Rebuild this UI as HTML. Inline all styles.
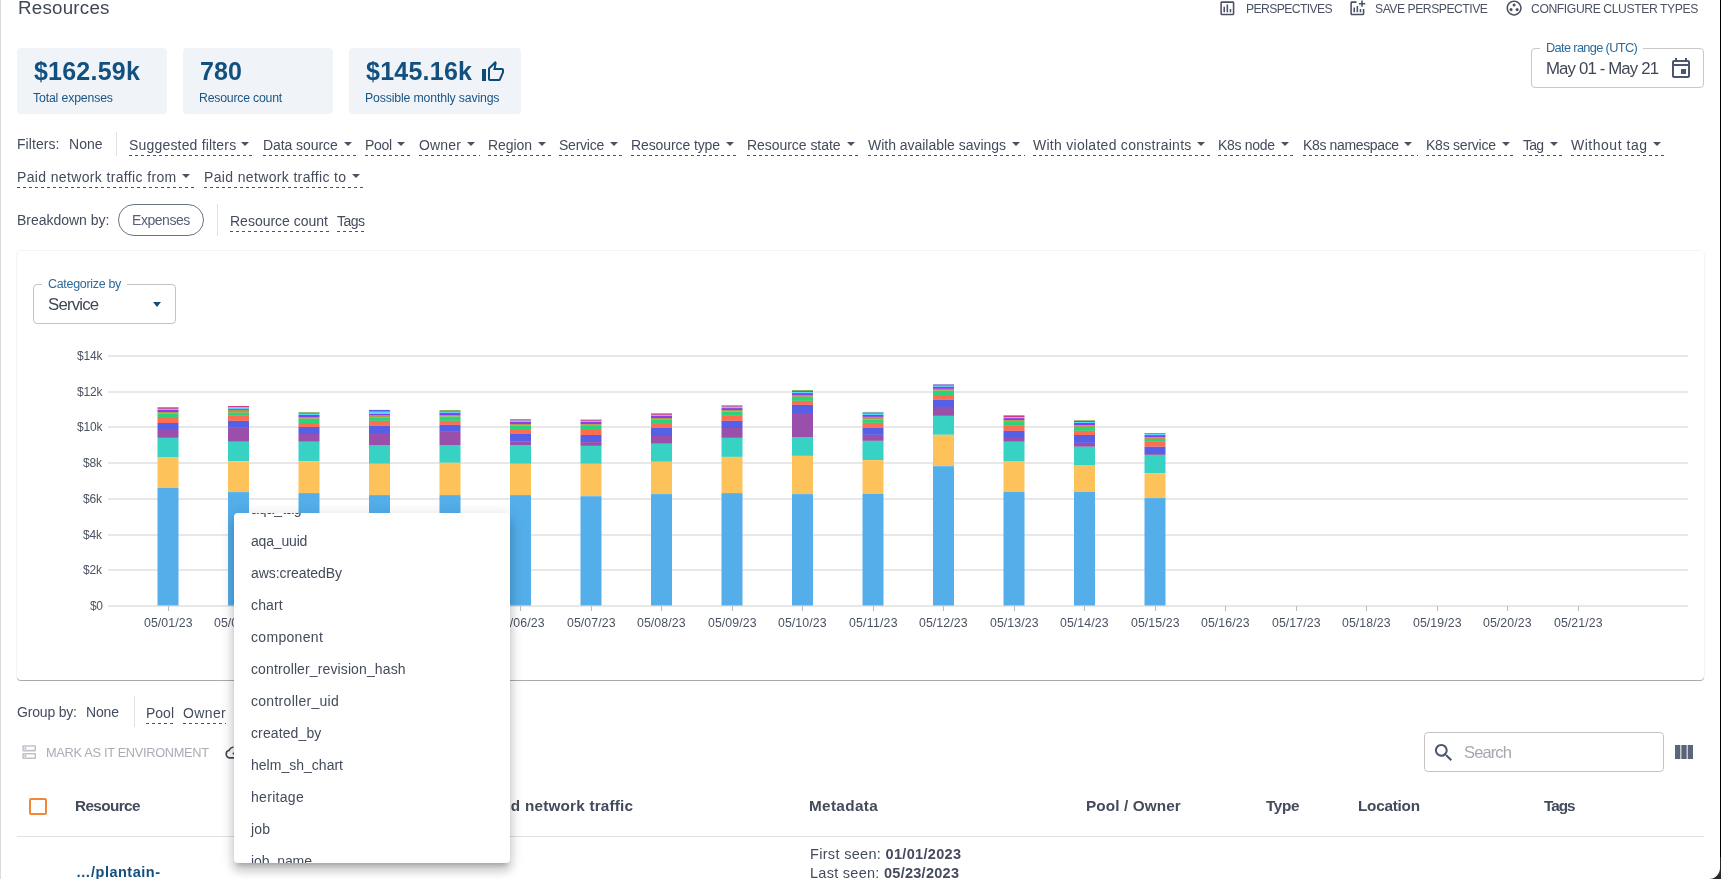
<!DOCTYPE html>
<html><head><meta charset="utf-8"><style>
html,body{margin:0;padding:0;background:#fff;width:1721px;height:879px;overflow:hidden;position:relative}
body{font-family:"Liberation Sans", sans-serif}
.t{position:absolute;white-space:nowrap;will-change:transform}
.caret{position:absolute;width:0;height:0;border-left:4px solid transparent;border-right:4px solid transparent;border-top:4px solid #4a5263}
.yl{position:absolute;right:1618.5px;font-size:12.5px;line-height:12.5px;color:#4a5263}
</style></head><body>
<div style="position:absolute;left:0px;top:0px;width:1px;height:879px;background:#dadada"></div><div class="t" style="left:17.5px;top:-1.11px;font-size:18.8px;line-height:18.8px;color:#3f4756;font-weight:400;letter-spacing:0.215px;">Resources</div><svg style="position:absolute;left:1218.4px;top:-1.0px" width="18.7" height="18.7" viewBox="0 0 24 24"><path fill="#4a5263" d="M19 3H5c-1.1 0-2 .9-2 2v14c0 1.1.9 2 2 2h14c1.1 0 2-.9 2-2V5c0-1.1-.9-2-2-2zm0 16H5V5h14v14zM7 10h2v7H7zm4-3h2v10h-2zm4 6h2v4h-2z"/></svg><div class="t" style="left:1245.7px;top:3.37px;font-size:12.2px;line-height:12.2px;color:#4a5263;font-weight:400;letter-spacing:-0.624px;">PERSPECTIVES</div><svg style="position:absolute;left:1348.4px;top:-1.0px" width="18.7" height="18.7" viewBox="0 0 24 24"><path fill="#4a5263" d="M22 5v2h-3v3h-2V7h-3V5h3V2h2v3h3zm-3 14H5V5h6V3H5c-1.1 0-2 .9-2 2v14c0 1.1.9 2 2 2h14c1.1 0 2-.9 2-2v-6h-2v6zm-4-6v4h2v-4h-2zm-4 4h2V9h-2v8zm-2 0v-6H7v6h2z"/></svg><div class="t" style="left:1374.7px;top:3.37px;font-size:12.2px;line-height:12.2px;color:#4a5263;font-weight:400;letter-spacing:-0.490px;">SAVE PERSPECTIVE</div><svg style="position:absolute;left:1504.9px;top:-0.8px" width="18.2" height="18.2" viewBox="0 0 24 24"><path fill="#4a5263" d="M12 2C6.48 2 2 6.48 2 12s4.48 10 10 10 10-4.48 10-10S17.52 2 12 2zm0 18c-4.41 0-8-3.59-8-8s3.59-8 8-8 8 3.59 8 8-3.59 8-8 8z"/><circle cx="8" cy="14" r="2" fill="#4a5263"/><circle cx="12" cy="8" r="2" fill="#4a5263"/><circle cx="16" cy="14" r="2" fill="#4a5263"/></svg><div class="t" style="left:1531.3px;top:3.37px;font-size:12.2px;line-height:12.2px;color:#4a5263;font-weight:400;letter-spacing:-0.415px;">CONFIGURE CLUSTER TYPES</div><div style="position:absolute;left:17px;top:48px;width:150px;height:66px;background:#f0f4f8;border-radius:4px"></div><div class="t" style="left:34px;top:58.84px;font-size:25px;line-height:25px;color:#11507f;font-weight:700;letter-spacing:0.217px;">$162.59k</div><div class="t" style="left:33.3px;top:92.29px;font-size:12.3px;line-height:12.3px;color:#1b5585;font-weight:400;letter-spacing:-0.156px;">Total expenses</div><div style="position:absolute;left:183px;top:48px;width:150px;height:66px;background:#f0f4f8;border-radius:4px"></div><div class="t" style="left:200px;top:58.84px;font-size:25px;line-height:25px;color:#11507f;font-weight:700;letter-spacing:0.141px;">780</div><div class="t" style="left:199.3px;top:92.29px;font-size:12.3px;line-height:12.3px;color:#1b5585;font-weight:400;letter-spacing:-0.219px;">Resource count</div><div style="position:absolute;left:349px;top:48px;width:172px;height:66px;background:#f0f4f8;border-radius:4px"></div><div class="t" style="left:366px;top:58.84px;font-size:25px;line-height:25px;color:#11507f;font-weight:700;letter-spacing:0.246px;">$145.16k</div><div class="t" style="left:365.3px;top:92.29px;font-size:12.3px;line-height:12.3px;color:#1b5585;font-weight:400;letter-spacing:-0.156px;">Possible monthly savings</div><svg style="position:absolute;left:481px;top:60px" width="24" height="24" viewBox="0 0 24 24"><path fill="#0c4a78" d="M21 8h-6.31l.95-4.57.03-.32c0-.41-.17-.79-.44-1.06L14.17 1 7.59 7.59C7.22 7.95 7 8.45 7 9v10c0 1.1.9 2 2 2h9c.83 0 1.54-.5 1.84-1.22l3.02-7.05c.09-.23.14-.47.14-.73v-2c0-1.1-.9-2-2-2zm0 4l-3 7H9V9l4.34-4.34L12.23 10H21v2zM1 9h4v12H1z"/></svg><div style="position:absolute;left:1531px;top:48px;width:173px;height:40px;box-sizing:border-box;border:1px solid #c8c8c8;border-radius:4px"></div><div style="position:absolute;left:1540px;top:44px;width:103px;height:8px;background:#fff"></div><div class="t" style="left:1545.5px;top:42.16px;font-size:12.8px;line-height:12.8px;color:#2d6a9a;font-weight:400;letter-spacing:-0.660px;">Date range (UTC)</div><div class="t" style="left:1545.8px;top:60.68px;font-size:16.8px;line-height:16.8px;color:#3f4756;font-weight:400;letter-spacing:-0.856px;">May 01 - May 21</div><svg style="position:absolute;left:1669px;top:55.8px" width="24" height="24" viewBox="0 0 24 24"><path fill="#4b5670" d="M19 4h-1V2h-2v2H8V2H6v2H5c-1.11 0-1.99.9-1.99 2L3 20c0 1.1.89 2 2 2h14c1.1 0 2-.9 2-2V6c0-1.1-.9-2-2-2zm0 16H5V10h14v10zm0-12H5V6h14v2zm-7 5h5v5h-5z"/></svg><div class="t" style="left:17.4px;top:136.65px;font-size:14px;line-height:14px;color:#434b5c;font-weight:400;letter-spacing:0.057px;">Filters:</div><div class="t" style="left:68.5px;top:136.65px;font-size:14px;line-height:14px;color:#434b5c;font-weight:400;letter-spacing:0.044px;">None</div><div style="position:absolute;left:116px;top:132px;width:1px;height:24px;background:#e2e2e2"></div><div class="t" style="left:128.6px;top:138.15px;font-size:14px;line-height:14px;color:#434b5c;font-weight:400;letter-spacing:0.181px;">Suggested filters</div><div class="caret" style="left:241.3px;top:142.0px"></div><div style="position:absolute;left:128.6px;top:155px;width:126.20000000000002px;height:1px;background:repeating-linear-gradient(90deg,#4a5263 0 3px,transparent 3px 6px)"></div><div class="t" style="left:263.2px;top:138.15px;font-size:14px;line-height:14px;color:#434b5c;font-weight:400;letter-spacing:-0.068px;">Data source</div><div class="caret" style="left:343.5px;top:142.0px"></div><div style="position:absolute;left:263.2px;top:155px;width:93.80000000000001px;height:1px;background:repeating-linear-gradient(90deg,#4a5263 0 3px,transparent 3px 6px)"></div><div class="t" style="left:364.6px;top:138.15px;font-size:14px;line-height:14px;color:#434b5c;font-weight:400;letter-spacing:-0.277px;">Pool</div><div class="caret" style="left:397.3px;top:142.0px"></div><div style="position:absolute;left:364.6px;top:155px;width:46.19999999999999px;height:1px;background:repeating-linear-gradient(90deg,#4a5263 0 3px,transparent 3px 6px)"></div><div class="t" style="left:419.2px;top:138.15px;font-size:14px;line-height:14px;color:#434b5c;font-weight:400;letter-spacing:0.141px;">Owner</div><div class="caret" style="left:466.5px;top:142.0px"></div><div style="position:absolute;left:419.2px;top:155px;width:60.80000000000001px;height:1px;background:repeating-linear-gradient(90deg,#4a5263 0 3px,transparent 3px 6px)"></div><div class="t" style="left:488px;top:138.15px;font-size:14px;line-height:14px;color:#434b5c;font-weight:400;letter-spacing:-0.075px;">Region</div><div class="caret" style="left:537.5px;top:142.0px"></div><div style="position:absolute;left:488px;top:155px;width:63px;height:1px;background:repeating-linear-gradient(90deg,#4a5263 0 3px,transparent 3px 6px)"></div><div class="t" style="left:558.7px;top:138.15px;font-size:14px;line-height:14px;color:#434b5c;font-weight:400;letter-spacing:-0.231px;">Service</div><div class="caret" style="left:609.5px;top:142.0px"></div><div style="position:absolute;left:558.7px;top:155px;width:64.29999999999995px;height:1px;background:repeating-linear-gradient(90deg,#4a5263 0 3px,transparent 3px 6px)"></div><div class="t" style="left:630.9px;top:138.15px;font-size:14px;line-height:14px;color:#434b5c;font-weight:400;letter-spacing:-0.098px;">Resource type</div><div class="caret" style="left:725.5px;top:142.0px"></div><div style="position:absolute;left:630.9px;top:155px;width:108.10000000000002px;height:1px;background:repeating-linear-gradient(90deg,#4a5263 0 3px,transparent 3px 6px)"></div><div class="t" style="left:747.4px;top:138.15px;font-size:14px;line-height:14px;color:#434b5c;font-weight:400;letter-spacing:-0.044px;">Resource state</div><div class="caret" style="left:846.5px;top:142.0px"></div><div style="position:absolute;left:747.4px;top:155px;width:112.60000000000002px;height:1px;background:repeating-linear-gradient(90deg,#4a5263 0 3px,transparent 3px 6px)"></div><div class="t" style="left:868px;top:138.15px;font-size:14px;line-height:14px;color:#434b5c;font-weight:400;letter-spacing:-0.025px;">With available savings</div><div class="caret" style="left:1011.5px;top:142.0px"></div><div style="position:absolute;left:868px;top:155px;width:157px;height:1px;background:repeating-linear-gradient(90deg,#4a5263 0 3px,transparent 3px 6px)"></div><div class="t" style="left:1033px;top:138.15px;font-size:14px;line-height:14px;color:#434b5c;font-weight:400;letter-spacing:0.274px;">With violated constraints</div><div class="caret" style="left:1196.8px;top:142.0px"></div><div style="position:absolute;left:1033px;top:155px;width:177.29999999999995px;height:1px;background:repeating-linear-gradient(90deg,#4a5263 0 3px,transparent 3px 6px)"></div><div class="t" style="left:1218px;top:138.15px;font-size:14px;line-height:14px;color:#434b5c;font-weight:400;letter-spacing:-0.310px;">K8s node</div><div class="caret" style="left:1280.5px;top:142.0px"></div><div style="position:absolute;left:1218px;top:155px;width:76px;height:1px;background:repeating-linear-gradient(90deg,#4a5263 0 3px,transparent 3px 6px)"></div><div class="t" style="left:1302.8px;top:138.15px;font-size:14px;line-height:14px;color:#434b5c;font-weight:400;letter-spacing:-0.359px;">K8s namespace</div><div class="caret" style="left:1404.4px;top:142.0px"></div><div style="position:absolute;left:1302.8px;top:155px;width:115.10000000000014px;height:1px;background:repeating-linear-gradient(90deg,#4a5263 0 3px,transparent 3px 6px)"></div><div class="t" style="left:1426px;top:138.15px;font-size:14px;line-height:14px;color:#434b5c;font-weight:400;letter-spacing:-0.236px;">K8s service</div><div class="caret" style="left:1501.5px;top:142.0px"></div><div style="position:absolute;left:1426px;top:155px;width:89px;height:1px;background:repeating-linear-gradient(90deg,#4a5263 0 3px,transparent 3px 6px)"></div><div class="t" style="left:1523px;top:138.15px;font-size:14px;line-height:14px;color:#434b5c;font-weight:400;letter-spacing:-0.789px;">Tag</div><div class="caret" style="left:1549.5px;top:142.0px"></div><div style="position:absolute;left:1523px;top:155px;width:40px;height:1px;background:repeating-linear-gradient(90deg,#4a5263 0 3px,transparent 3px 6px)"></div><div class="t" style="left:1571px;top:138.15px;font-size:14px;line-height:14px;color:#434b5c;font-weight:400;letter-spacing:0.517px;">Without tag</div><div class="caret" style="left:1652.5px;top:142.0px"></div><div style="position:absolute;left:1571px;top:155px;width:95px;height:1px;background:repeating-linear-gradient(90deg,#4a5263 0 3px,transparent 3px 6px)"></div><div class="t" style="left:17.4px;top:170.15px;font-size:14px;line-height:14px;color:#434b5c;font-weight:400;letter-spacing:0.355px;">Paid network traffic from</div><div class="caret" style="left:182.1px;top:174.0px"></div><div style="position:absolute;left:17.4px;top:187px;width:178.2px;height:1px;background:repeating-linear-gradient(90deg,#4a5263 0 3px,transparent 3px 6px)"></div><div class="t" style="left:203.9px;top:170.15px;font-size:14px;line-height:14px;color:#434b5c;font-weight:400;letter-spacing:0.351px;">Paid network traffic to</div><div class="caret" style="left:351.5px;top:174.0px"></div><div style="position:absolute;left:203.9px;top:187px;width:161.1px;height:1px;background:repeating-linear-gradient(90deg,#4a5263 0 3px,transparent 3px 6px)"></div><div class="t" style="left:17.4px;top:213.15px;font-size:14px;line-height:14px;color:#434b5c;font-weight:400;letter-spacing:-0.017px;">Breakdown by:</div><div style="position:absolute;left:118px;top:204px;width:86px;height:32px;box-sizing:border-box;border:1px solid #6b7488;border-radius:16px"></div><div class="t" style="left:132px;top:212.75px;font-size:14px;line-height:14px;color:#566075;font-weight:400;letter-spacing:-0.455px;">Expenses</div><div style="position:absolute;left:217px;top:204px;width:1px;height:32px;background:#e2e2e2"></div><div class="t" style="left:230.2px;top:214.15px;font-size:14px;line-height:14px;color:#434b5c;font-weight:400;letter-spacing:-0.005px;">Resource count</div><div style="position:absolute;left:230.2px;top:231px;width:98.80000000000001px;height:1px;background:repeating-linear-gradient(90deg,#4a5263 0 3px,transparent 3px 6px)"></div><div class="t" style="left:336.9px;top:214.15px;font-size:14px;line-height:14px;color:#434b5c;font-weight:400;letter-spacing:-0.559px;">Tags</div><div style="position:absolute;left:336.9px;top:231px;width:29.100000000000023px;height:1px;background:repeating-linear-gradient(90deg,#4a5263 0 3px,transparent 3px 6px)"></div><div style="position:absolute;left:17px;top:251px;width:1687px;height:429px;background:#fff;border-radius:4px;box-shadow:0 1px 0.6px rgba(0,0,0,0.3), 0 0 0 1px rgba(0,0,0,0.045)"></div><div style="position:absolute;left:33px;top:284px;width:143px;height:40px;box-sizing:border-box;border:1px solid #c4c4c4;border-radius:4px"></div><div style="position:absolute;left:42px;top:278px;width:85px;height:8px;background:#fff"></div><div class="t" style="left:47.6px;top:277.62px;font-size:12.5px;line-height:12.5px;color:#2d6a9a;font-weight:400;letter-spacing:-0.319px;">Categorize by</div><div class="t" style="left:47.6px;top:297.28px;font-size:16.8px;line-height:16.8px;color:#3f4756;font-weight:400;letter-spacing:-0.795px;">Service</div><div style="position:absolute;left:152.5px;top:301.5px;width:0;height:0;border-left:4.7px solid transparent;border-right:4.7px solid transparent;border-top:5.3px solid #0f4d7a"></div><div style="position:absolute;left:108px;top:605px;width:1580px;height:2px;background:#e8e8e8"></div><div class="t" style="left:89.6px;top:600.34px;font-size:12px;line-height:12px;color:#4a5263;font-weight:400;letter-spacing:-0.459px;">$0</div><div style="position:absolute;left:108px;top:569px;width:1580px;height:2px;background:#e8e8e8"></div><div class="t" style="left:83.4px;top:564.34px;font-size:12px;line-height:12px;color:#4a5263;font-weight:400;letter-spacing:-0.130px;">$2k</div><div style="position:absolute;left:108px;top:534px;width:1580px;height:2px;background:#e8e8e8"></div><div class="t" style="left:83.4px;top:529.34px;font-size:12px;line-height:12px;color:#4a5263;font-weight:400;letter-spacing:-0.130px;">$4k</div><div style="position:absolute;left:108px;top:498px;width:1580px;height:2px;background:#e8e8e8"></div><div class="t" style="left:83.4px;top:493.34px;font-size:12px;line-height:12px;color:#4a5263;font-weight:400;letter-spacing:-0.130px;">$6k</div><div style="position:absolute;left:108px;top:462px;width:1580px;height:2px;background:#e8e8e8"></div><div class="t" style="left:83.4px;top:457.34px;font-size:12px;line-height:12px;color:#4a5263;font-weight:400;letter-spacing:-0.130px;">$8k</div><div style="position:absolute;left:108px;top:426px;width:1580px;height:2px;background:#e8e8e8"></div><div class="t" style="left:77.0px;top:421.34px;font-size:12px;line-height:12px;color:#4a5263;font-weight:400;letter-spacing:-0.177px;">$10k</div><div style="position:absolute;left:108px;top:391px;width:1580px;height:2px;background:#e8e8e8"></div><div class="t" style="left:77.0px;top:386.34px;font-size:12px;line-height:12px;color:#4a5263;font-weight:400;letter-spacing:-0.177px;">$12k</div><div style="position:absolute;left:108px;top:355px;width:1580px;height:2px;background:#e8e8e8"></div><div class="t" style="left:77.0px;top:350.34px;font-size:12px;line-height:12px;color:#4a5263;font-weight:400;letter-spacing:-0.177px;">$14k</div><div style="position:absolute;left:168px;top:606px;width:1px;height:5px;background:#b7bcc6"></div><div class="t" style="left:143.7px;top:616.59px;font-size:12.3px;line-height:12.3px;color:#4a5263;font-weight:400;letter-spacing:0.089px;">05/01/23</div><div style="position:absolute;left:238px;top:606px;width:1px;height:5px;background:#b7bcc6"></div><div class="t" style="left:214.2px;top:616.59px;font-size:12.3px;line-height:12.3px;color:#4a5263;font-weight:400;letter-spacing:0.089px;">05/02/23</div><div style="position:absolute;left:309px;top:606px;width:1px;height:5px;background:#b7bcc6"></div><div class="t" style="left:284.7px;top:616.59px;font-size:12.3px;line-height:12.3px;color:#4a5263;font-weight:400;letter-spacing:0.089px;">05/03/23</div><div style="position:absolute;left:379px;top:606px;width:1px;height:5px;background:#b7bcc6"></div><div class="t" style="left:355.2px;top:616.59px;font-size:12.3px;line-height:12.3px;color:#4a5263;font-weight:400;letter-spacing:0.089px;">05/04/23</div><div style="position:absolute;left:450px;top:606px;width:1px;height:5px;background:#b7bcc6"></div><div class="t" style="left:425.7px;top:616.59px;font-size:12.3px;line-height:12.3px;color:#4a5263;font-weight:400;letter-spacing:0.089px;">05/05/23</div><div style="position:absolute;left:520px;top:606px;width:1px;height:5px;background:#b7bcc6"></div><div class="t" style="left:496.2px;top:616.59px;font-size:12.3px;line-height:12.3px;color:#4a5263;font-weight:400;letter-spacing:0.089px;">05/06/23</div><div style="position:absolute;left:591px;top:606px;width:1px;height:5px;background:#b7bcc6"></div><div class="t" style="left:566.7px;top:616.59px;font-size:12.3px;line-height:12.3px;color:#4a5263;font-weight:400;letter-spacing:0.089px;">05/07/23</div><div style="position:absolute;left:661px;top:606px;width:1px;height:5px;background:#b7bcc6"></div><div class="t" style="left:637.2px;top:616.59px;font-size:12.3px;line-height:12.3px;color:#4a5263;font-weight:400;letter-spacing:0.089px;">05/08/23</div><div style="position:absolute;left:732px;top:606px;width:1px;height:5px;background:#b7bcc6"></div><div class="t" style="left:707.7px;top:616.59px;font-size:12.3px;line-height:12.3px;color:#4a5263;font-weight:400;letter-spacing:0.089px;">05/09/23</div><div style="position:absolute;left:802px;top:606px;width:1px;height:5px;background:#b7bcc6"></div><div class="t" style="left:778.2px;top:616.59px;font-size:12.3px;line-height:12.3px;color:#4a5263;font-weight:400;letter-spacing:0.089px;">05/10/23</div><div style="position:absolute;left:873px;top:606px;width:1px;height:5px;background:#b7bcc6"></div><div class="t" style="left:848.7px;top:616.59px;font-size:12.3px;line-height:12.3px;color:#4a5263;font-weight:400;letter-spacing:0.219px;">05/11/23</div><div style="position:absolute;left:943px;top:606px;width:1px;height:5px;background:#b7bcc6"></div><div class="t" style="left:919.2px;top:616.59px;font-size:12.3px;line-height:12.3px;color:#4a5263;font-weight:400;letter-spacing:0.089px;">05/12/23</div><div style="position:absolute;left:1014px;top:606px;width:1px;height:5px;background:#b7bcc6"></div><div class="t" style="left:989.7px;top:616.59px;font-size:12.3px;line-height:12.3px;color:#4a5263;font-weight:400;letter-spacing:0.089px;">05/13/23</div><div style="position:absolute;left:1084px;top:606px;width:1px;height:5px;background:#b7bcc6"></div><div class="t" style="left:1060.2px;top:616.59px;font-size:12.3px;line-height:12.3px;color:#4a5263;font-weight:400;letter-spacing:0.089px;">05/14/23</div><div style="position:absolute;left:1155px;top:606px;width:1px;height:5px;background:#b7bcc6"></div><div class="t" style="left:1130.7px;top:616.59px;font-size:12.3px;line-height:12.3px;color:#4a5263;font-weight:400;letter-spacing:0.089px;">05/15/23</div><div style="position:absolute;left:1225px;top:606px;width:1px;height:5px;background:#b7bcc6"></div><div class="t" style="left:1201.2px;top:616.59px;font-size:12.3px;line-height:12.3px;color:#4a5263;font-weight:400;letter-spacing:0.089px;">05/16/23</div><div style="position:absolute;left:1296px;top:606px;width:1px;height:5px;background:#b7bcc6"></div><div class="t" style="left:1271.7px;top:616.59px;font-size:12.3px;line-height:12.3px;color:#4a5263;font-weight:400;letter-spacing:0.089px;">05/17/23</div><div style="position:absolute;left:1366px;top:606px;width:1px;height:5px;background:#b7bcc6"></div><div class="t" style="left:1342.2px;top:616.59px;font-size:12.3px;line-height:12.3px;color:#4a5263;font-weight:400;letter-spacing:0.089px;">05/18/23</div><div style="position:absolute;left:1437px;top:606px;width:1px;height:5px;background:#b7bcc6"></div><div class="t" style="left:1412.7px;top:616.59px;font-size:12.3px;line-height:12.3px;color:#4a5263;font-weight:400;letter-spacing:0.089px;">05/19/23</div><div style="position:absolute;left:1507px;top:606px;width:1px;height:5px;background:#b7bcc6"></div><div class="t" style="left:1483.2px;top:616.59px;font-size:12.3px;line-height:12.3px;color:#4a5263;font-weight:400;letter-spacing:0.089px;">05/20/23</div><div style="position:absolute;left:1578px;top:606px;width:1px;height:5px;background:#b7bcc6"></div><div class="t" style="left:1553.7px;top:616.59px;font-size:12.3px;line-height:12.3px;color:#4a5263;font-weight:400;letter-spacing:0.089px;">05/21/23</div><svg style="position:absolute;left:0;top:0" width="1721" height="879"><rect x="157.5" y="407.1" width="21" height="0.90" fill="#7fa64b"/><rect x="157.5" y="408.0" width="21" height="0.90" fill="#d23b86"/><rect x="157.5" y="408.9" width="21" height="1.00" fill="#4ddcfb"/><rect x="157.5" y="409.9" width="21" height="2.10" fill="#8a3ef0"/><rect x="157.5" y="412.0" width="21" height="1.80" fill="#b5984c"/><rect x="157.5" y="413.8" width="21" height="4.20" fill="#2bd47a"/><rect x="157.5" y="418.0" width="21" height="5.00" fill="#fe6f52"/><rect x="157.5" y="423.0" width="21" height="7.00" fill="#5560e6"/><rect x="157.5" y="430.0" width="21" height="7.90" fill="#9a50ab"/><rect x="157.5" y="437.9" width="21" height="19.20" fill="#38d2c5"/><rect x="157.5" y="457.1" width="21" height="30.90" fill="#fdc35a"/><rect x="157.5" y="488.0" width="21" height="117.50" fill="#53aeea"/><rect x="228.0" y="406.0" width="21" height="1.00" fill="#d23b86"/><rect x="228.0" y="407.0" width="21" height="1.90" fill="#4ddcfb"/><rect x="228.0" y="408.9" width="21" height="1.00" fill="#8a3ef0"/><rect x="228.0" y="409.9" width="21" height="2.90" fill="#b5984c"/><rect x="228.0" y="412.8" width="21" height="3.10" fill="#2bd47a"/><rect x="228.0" y="415.9" width="21" height="5.00" fill="#fe6f52"/><rect x="228.0" y="420.9" width="21" height="7.00" fill="#5560e6"/><rect x="228.0" y="427.9" width="21" height="13.90" fill="#9a50ab"/><rect x="228.0" y="441.8" width="21" height="19.40" fill="#38d2c5"/><rect x="228.0" y="461.2" width="21" height="30.90" fill="#fdc35a"/><rect x="228.0" y="492.1" width="21" height="113.40" fill="#53aeea"/><rect x="298.5" y="412.2" width="21" height="0.90" fill="#7fa64b"/><rect x="298.5" y="413.1" width="21" height="0.80" fill="#d23b86"/><rect x="298.5" y="413.9" width="21" height="1.10" fill="#4ddcfb"/><rect x="298.5" y="415.0" width="21" height="2.00" fill="#8a3ef0"/><rect x="298.5" y="417.0" width="21" height="1.80" fill="#b5984c"/><rect x="298.5" y="418.8" width="21" height="4.20" fill="#2bd47a"/><rect x="298.5" y="423.0" width="21" height="4.00" fill="#fe6f52"/><rect x="298.5" y="427.0" width="21" height="7.00" fill="#5560e6"/><rect x="298.5" y="434.0" width="21" height="7.80" fill="#9a50ab"/><rect x="298.5" y="441.8" width="21" height="19.40" fill="#38d2c5"/><rect x="298.5" y="461.2" width="21" height="31.90" fill="#fdc35a"/><rect x="298.5" y="493.1" width="21" height="112.40" fill="#53aeea"/><rect x="369.0" y="409.9" width="21" height="1.10" fill="#5560e6"/><rect x="369.0" y="411.0" width="21" height="0.80" fill="#d23b86"/><rect x="369.0" y="411.8" width="21" height="2.10" fill="#4ddcfb"/><rect x="369.0" y="413.9" width="21" height="1.10" fill="#8a3ef0"/><rect x="369.0" y="415.0" width="21" height="2.80" fill="#b5984c"/><rect x="369.0" y="417.8" width="21" height="3.10" fill="#2bd47a"/><rect x="369.0" y="420.9" width="21" height="5.00" fill="#fe6f52"/><rect x="369.0" y="425.9" width="21" height="7.10" fill="#5560e6"/><rect x="369.0" y="433.0" width="21" height="12.00" fill="#9a50ab"/><rect x="369.0" y="445.0" width="21" height="18.80" fill="#38d2c5"/><rect x="369.0" y="463.8" width="21" height="31.30" fill="#fdc35a"/><rect x="369.0" y="495.1" width="21" height="110.40" fill="#53aeea"/><rect x="439.5" y="410.1" width="21" height="0.90" fill="#7fa64b"/><rect x="439.5" y="411.0" width="21" height="0.80" fill="#d23b86"/><rect x="439.5" y="411.8" width="21" height="1.10" fill="#4ddcfb"/><rect x="439.5" y="412.9" width="21" height="2.10" fill="#8a3ef0"/><rect x="439.5" y="415.0" width="21" height="1.70" fill="#b5984c"/><rect x="439.5" y="416.7" width="21" height="4.20" fill="#2bd47a"/><rect x="439.5" y="420.9" width="21" height="4.00" fill="#fe6f52"/><rect x="439.5" y="424.9" width="21" height="7.00" fill="#5560e6"/><rect x="439.5" y="431.9" width="21" height="13.10" fill="#9a50ab"/><rect x="439.5" y="445.0" width="21" height="17.80" fill="#38d2c5"/><rect x="439.5" y="462.8" width="21" height="32.30" fill="#fdc35a"/><rect x="439.5" y="495.1" width="21" height="110.40" fill="#53aeea"/><rect x="510.0" y="419.0" width="21" height="0.90" fill="#7fa64b"/><rect x="510.0" y="419.9" width="21" height="0.80" fill="#d23b86"/><rect x="510.0" y="420.7" width="21" height="1.30" fill="#4ddcfb"/><rect x="510.0" y="422.0" width="21" height="2.00" fill="#8a3ef0"/><rect x="510.0" y="424.0" width="21" height="1.80" fill="#b5984c"/><rect x="510.0" y="425.8" width="21" height="4.20" fill="#2bd47a"/><rect x="510.0" y="430.0" width="21" height="4.00" fill="#fe6f52"/><rect x="510.0" y="434.0" width="21" height="7.80" fill="#5560e6"/><rect x="510.0" y="441.8" width="21" height="3.20" fill="#9a50ab"/><rect x="510.0" y="445.0" width="21" height="18.80" fill="#38d2c5"/><rect x="510.0" y="463.8" width="21" height="31.30" fill="#fdc35a"/><rect x="510.0" y="495.1" width="21" height="110.40" fill="#53aeea"/><rect x="580.5" y="419.1" width="21" height="0.80" fill="#fdc35a"/><rect x="580.5" y="419.9" width="21" height="1.00" fill="#d23b86"/><rect x="580.5" y="420.9" width="21" height="1.10" fill="#4ddcfb"/><rect x="580.5" y="422.0" width="21" height="2.10" fill="#8a3ef0"/><rect x="580.5" y="424.1" width="21" height="1.80" fill="#b5984c"/><rect x="580.5" y="425.9" width="21" height="4.10" fill="#2bd47a"/><rect x="580.5" y="430.0" width="21" height="5.00" fill="#fe6f52"/><rect x="580.5" y="435.0" width="21" height="7.10" fill="#5560e6"/><rect x="580.5" y="442.1" width="21" height="3.80" fill="#9a50ab"/><rect x="580.5" y="445.9" width="21" height="17.90" fill="#38d2c5"/><rect x="580.5" y="463.8" width="21" height="32.40" fill="#fdc35a"/><rect x="580.5" y="496.2" width="21" height="109.30" fill="#53aeea"/><rect x="651.0" y="413.1" width="21" height="0.70" fill="#53aeea"/><rect x="651.0" y="413.8" width="21" height="1.10" fill="#d23b86"/><rect x="651.0" y="414.9" width="21" height="1.00" fill="#4ddcfb"/><rect x="651.0" y="415.9" width="21" height="2.10" fill="#8a3ef0"/><rect x="651.0" y="418.0" width="21" height="1.80" fill="#b5984c"/><rect x="651.0" y="419.8" width="21" height="4.20" fill="#2bd47a"/><rect x="651.0" y="424.0" width="21" height="4.00" fill="#fe6f52"/><rect x="651.0" y="428.0" width="21" height="8.00" fill="#5560e6"/><rect x="651.0" y="436.0" width="21" height="7.80" fill="#9a50ab"/><rect x="651.0" y="443.8" width="21" height="18.00" fill="#38d2c5"/><rect x="651.0" y="461.8" width="21" height="32.30" fill="#fdc35a"/><rect x="651.0" y="494.1" width="21" height="111.40" fill="#53aeea"/><rect x="721.5" y="405.1" width="21" height="0.70" fill="#53aeea"/><rect x="721.5" y="405.8" width="21" height="1.00" fill="#d23b86"/><rect x="721.5" y="406.8" width="21" height="1.30" fill="#4ddcfb"/><rect x="721.5" y="408.1" width="21" height="1.90" fill="#8a3ef0"/><rect x="721.5" y="410.0" width="21" height="1.70" fill="#b5984c"/><rect x="721.5" y="411.7" width="21" height="4.20" fill="#2bd47a"/><rect x="721.5" y="415.9" width="21" height="5.00" fill="#fe6f52"/><rect x="721.5" y="420.9" width="21" height="7.10" fill="#5560e6"/><rect x="721.5" y="428.0" width="21" height="9.90" fill="#9a50ab"/><rect x="721.5" y="437.9" width="21" height="19.00" fill="#38d2c5"/><rect x="721.5" y="456.9" width="21" height="36.20" fill="#fdc35a"/><rect x="721.5" y="493.1" width="21" height="112.40" fill="#53aeea"/><rect x="792.0" y="390.1" width="21" height="0.90" fill="#7fa64b"/><rect x="792.0" y="391.0" width="21" height="1.00" fill="#d23b86"/><rect x="792.0" y="392.0" width="21" height="1.10" fill="#4ddcfb"/><rect x="792.0" y="393.1" width="21" height="1.90" fill="#8a3ef0"/><rect x="792.0" y="395.0" width="21" height="1.90" fill="#b5984c"/><rect x="792.0" y="396.9" width="21" height="4.00" fill="#2bd47a"/><rect x="792.0" y="400.9" width="21" height="4.00" fill="#fe6f52"/><rect x="792.0" y="404.9" width="21" height="8.10" fill="#5560e6"/><rect x="792.0" y="413.0" width="21" height="24.00" fill="#9a50ab"/><rect x="792.0" y="437.0" width="21" height="18.90" fill="#38d2c5"/><rect x="792.0" y="455.9" width="21" height="38.20" fill="#fdc35a"/><rect x="792.0" y="494.1" width="21" height="111.40" fill="#53aeea"/><rect x="862.5" y="411.9" width="21" height="0.80" fill="#38d2c5"/><rect x="862.5" y="412.7" width="21" height="1.10" fill="#d23b86"/><rect x="862.5" y="413.8" width="21" height="1.20" fill="#4ddcfb"/><rect x="862.5" y="415.0" width="21" height="1.90" fill="#8a3ef0"/><rect x="862.5" y="416.9" width="21" height="2.80" fill="#b5984c"/><rect x="862.5" y="419.7" width="21" height="3.20" fill="#2bd47a"/><rect x="862.5" y="422.9" width="21" height="5.00" fill="#fe6f52"/><rect x="862.5" y="427.9" width="21" height="7.00" fill="#5560e6"/><rect x="862.5" y="434.9" width="21" height="6.00" fill="#9a50ab"/><rect x="862.5" y="440.9" width="21" height="19.20" fill="#38d2c5"/><rect x="862.5" y="460.1" width="21" height="33.90" fill="#fdc35a"/><rect x="862.5" y="494.0" width="21" height="111.50" fill="#53aeea"/><rect x="933.0" y="384.0" width="21" height="0.70" fill="#53aeea"/><rect x="933.0" y="384.7" width="21" height="1.10" fill="#d23b86"/><rect x="933.0" y="385.8" width="21" height="1.00" fill="#4ddcfb"/><rect x="933.0" y="386.8" width="21" height="2.10" fill="#8a3ef0"/><rect x="933.0" y="388.9" width="21" height="1.90" fill="#b5984c"/><rect x="933.0" y="390.8" width="21" height="4.20" fill="#2bd47a"/><rect x="933.0" y="395.0" width="21" height="4.90" fill="#fe6f52"/><rect x="933.0" y="399.9" width="21" height="7.10" fill="#5560e6"/><rect x="933.0" y="407.0" width="21" height="8.90" fill="#9a50ab"/><rect x="933.0" y="415.9" width="21" height="18.90" fill="#38d2c5"/><rect x="933.0" y="434.8" width="21" height="31.40" fill="#fdc35a"/><rect x="933.0" y="466.2" width="21" height="139.30" fill="#53aeea"/><rect x="1003.5" y="415.1" width="21" height="0.90" fill="#53aeea"/><rect x="1003.5" y="416.0" width="21" height="1.00" fill="#d23b86"/><rect x="1003.5" y="417.0" width="21" height="1.10" fill="#4ddcfb"/><rect x="1003.5" y="418.1" width="21" height="1.90" fill="#8a3ef0"/><rect x="1003.5" y="420.0" width="21" height="1.90" fill="#b5984c"/><rect x="1003.5" y="421.9" width="21" height="4.00" fill="#2bd47a"/><rect x="1003.5" y="425.9" width="21" height="5.00" fill="#fe6f52"/><rect x="1003.5" y="430.9" width="21" height="7.10" fill="#5560e6"/><rect x="1003.5" y="438.0" width="21" height="3.80" fill="#9a50ab"/><rect x="1003.5" y="441.8" width="21" height="19.20" fill="#38d2c5"/><rect x="1003.5" y="461.0" width="21" height="31.00" fill="#fdc35a"/><rect x="1003.5" y="492.0" width="21" height="113.50" fill="#53aeea"/><rect x="1074.0" y="420.2" width="21" height="0.70" fill="#7fa64b"/><rect x="1074.0" y="420.9" width="21" height="1.10" fill="#d23b86"/><rect x="1074.0" y="422.0" width="21" height="1.00" fill="#4ddcfb"/><rect x="1074.0" y="423.0" width="21" height="2.10" fill="#8a3ef0"/><rect x="1074.0" y="425.1" width="21" height="1.90" fill="#b5984c"/><rect x="1074.0" y="427.0" width="21" height="3.90" fill="#2bd47a"/><rect x="1074.0" y="430.9" width="21" height="4.10" fill="#fe6f52"/><rect x="1074.0" y="435.0" width="21" height="7.90" fill="#5560e6"/><rect x="1074.0" y="442.9" width="21" height="3.90" fill="#9a50ab"/><rect x="1074.0" y="446.8" width="21" height="18.20" fill="#38d2c5"/><rect x="1074.0" y="465.0" width="21" height="27.00" fill="#fdc35a"/><rect x="1074.0" y="492.0" width="21" height="113.50" fill="#53aeea"/><rect x="1144.5" y="433.0" width="21" height="1.10" fill="#7fa64b"/><rect x="1144.5" y="434.1" width="21" height="1.00" fill="#4ddcfb"/><rect x="1144.5" y="435.1" width="21" height="2.00" fill="#8a3ef0"/><rect x="1144.5" y="437.1" width="21" height="1.90" fill="#b5984c"/><rect x="1144.5" y="439.0" width="21" height="2.90" fill="#2bd47a"/><rect x="1144.5" y="441.9" width="21" height="4.90" fill="#fe6f52"/><rect x="1144.5" y="446.8" width="21" height="7.20" fill="#5560e6"/><rect x="1144.5" y="454.0" width="21" height="0.90" fill="#9a50ab"/><rect x="1144.5" y="454.9" width="21" height="18.20" fill="#38d2c5"/><rect x="1144.5" y="473.1" width="21" height="25.00" fill="#fdc35a"/><rect x="1144.5" y="498.1" width="21" height="107.40" fill="#53aeea"/></svg><div class="t" style="left:17.4px;top:704.95px;font-size:14px;line-height:14px;color:#434b5c;font-weight:400;letter-spacing:-0.186px;">Group by:</div><div class="t" style="left:86.4px;top:704.95px;font-size:14px;line-height:14px;color:#434b5c;font-weight:400;letter-spacing:-0.156px;">None</div><div style="position:absolute;left:134px;top:696px;width:1px;height:31px;background:#e2e2e2"></div><div class="t" style="left:146.4px;top:706.15px;font-size:14px;line-height:14px;color:#434b5c;font-weight:400;letter-spacing:-0.010px;">Pool</div><div style="position:absolute;left:146.4px;top:723px;width:29.099999999999994px;height:1px;background:repeating-linear-gradient(90deg,#4a5263 0 3px,transparent 3px 6px)"></div><div class="t" style="left:183.3px;top:706.15px;font-size:14px;line-height:14px;color:#434b5c;font-weight:400;letter-spacing:0.366px;">Owner</div><div style="position:absolute;left:183.3px;top:723px;width:42.69999999999999px;height:1px;background:repeating-linear-gradient(90deg,#4a5263 0 3px,transparent 3px 6px)"></div><div class="t" style="left:46.4px;top:746.76px;font-size:12.8px;line-height:12.8px;color:#a9adb6;font-weight:400;letter-spacing:-0.319px;">MARK AS IT ENVIRONMENT</div><svg style="position:absolute;left:19.75px;top:743.3px" width="18.3" height="18.3" viewBox="0 0 24 24"><path fill="#bfc2c8" d="M19 15v4H5v-4h14m1-2H4c-.55 0-1 .45-1 1v6c0 .55.45 1 1 1h16c.55 0 1-.45 1-1v-6c0-.55-.45-1-1-1zM7 18.5c-.82 0-1.5-.67-1.5-1.5s.68-1.5 1.5-1.5 1.5.67 1.5 1.5-.67 1.5-1.5 1.5zM19 5v4H5V5h14m1-2H4c-.55 0-1 .45-1 1v6c0 .55.45 1 1 1h16c.55 0 1-.45 1-1V4c0-.55-.45-1-1-1zM7 8.5c-.82 0-1.5-.67-1.5-1.5S6.18 5.5 7 5.5s1.5.68 1.5 1.5S7.83 8.5 7 8.5z"/></svg><svg style="position:absolute;left:220px;top:740px" width="20" height="24"><path d="M13.5 7 C10 7.5 9.5 9.5 9 10.5 C7 10.8 6.2 12.5 6.2 14 C6.2 16.3 8 17.8 10 17.8 L16 17.8" fill="none" stroke="#3f4756" stroke-width="1.7"/><circle cx="13.5" cy="13.5" r="1" fill="#3f4756"/></svg><div style="position:absolute;left:1424px;top:732px;width:240px;height:40px;box-sizing:border-box;border:1px solid #c4c4c4;border-radius:4px"></div><svg style="position:absolute;left:1432px;top:740.6px" width="23.5" height="23.5" viewBox="0 0 24 24"><path fill="#4b5670" d="M15.5 14h-.79l-.28-.27C15.41 12.59 16 11.11 16 9.5 16 5.91 13.09 3 9.5 3S3 5.91 3 9.5 5.91 16 9.5 16c1.61 0 3.09-.59 4.23-1.57l.27.28v.79l5 4.99L20.49 19l-4.99-5zm-6 0C7.01 14 5 11.99 5 9.5S7.01 5 9.5 5 14 7.01 14 9.5 11.99 14 9.5 14z"/></svg><div class="t" style="left:1464.2px;top:744.03px;font-size:16.5px;line-height:16.5px;color:#a3a7b0;font-weight:400;letter-spacing:-0.876px;">Search</div><svg style="position:absolute;left:1672px;top:740.3px" width="24" height="24" viewBox="0 0 24 24"><path fill="#5b6478" d="M14.67 5v14H9.33V5h5.34zm1 14H21V5h-5.33v14zm-7.34 0V5H3v14h5.33z"/></svg><div style="position:absolute;left:29px;top:798px;width:18px;height:17px;box-sizing:border-box;border:2px solid #f0883a;border-radius:2px"></div><div class="t" style="left:74.9px;top:797.55px;font-size:15.3px;line-height:15.3px;color:#434b5c;font-weight:700;letter-spacing:-0.603px;">Resource</div><div class="t" style="left:809.0px;top:797.55px;font-size:15.3px;line-height:15.3px;color:#434b5c;font-weight:700;letter-spacing:0.341px;">Metadata</div><div class="t" style="left:1086.0px;top:797.55px;font-size:15.3px;line-height:15.3px;color:#434b5c;font-weight:700;letter-spacing:0.118px;">Pool / Owner</div><div class="t" style="left:1265.6000000000001px;top:797.55px;font-size:15.3px;line-height:15.3px;color:#434b5c;font-weight:700;letter-spacing:-0.359px;">Type</div><div class="t" style="left:1358.2px;top:797.55px;font-size:15.3px;line-height:15.3px;color:#434b5c;font-weight:700;letter-spacing:-0.250px;">Location</div><div class="t" style="left:1543.8px;top:797.55px;font-size:15.3px;line-height:15.3px;color:#434b5c;font-weight:700;letter-spacing:-0.993px;">Tags</div><div class="t" style="left:485px;top:797.55px;font-size:15.3px;line-height:15.3px;color:#434b5c;font-weight:700;letter-spacing:0.896px;">Paid</div><div class="t" style="left:525px;top:797.55px;font-size:15.3px;line-height:15.3px;color:#434b5c;font-weight:700;letter-spacing:0.185px;">network traffic</div><div style="position:absolute;left:17px;top:836px;width:1687px;height:1px;background:#e0e0e0"></div><div class="t" style="left:809.8px;top:846.53px;font-size:14.5px;line-height:14.5px;color:#434b5c;font-weight:400;letter-spacing:0.319px;">First seen: <b>01/01/2023</b></div><div class="t" style="left:809.8px;top:865.93px;font-size:14.5px;line-height:14.5px;color:#434b5c;font-weight:400;letter-spacing:0.274px;">Last seen: <b>05/23/2023</b></div><div class="t" style="left:75.7px;top:865.23px;font-size:14.5px;line-height:14.5px;color:#11507f;font-weight:700;letter-spacing:0.505px;">…/plantain-</div><div style="position:absolute;left:234px;top:513px;width:276px;height:350px;background:#fff;border-radius:4px;overflow:hidden;box-shadow:0px 5px 5px -3px rgba(0,0,0,0.2),0px 8px 10px 1px rgba(0,0,0,0.14),0px 3px 14px 2px rgba(0,0,0,0.12)"><div class="t" style="left:16.6px;top:-11.25px;font-size:14px;line-height:14px;color:#434b5c;font-weight:400;">aqa_tag</div><div class="t" style="left:16.6px;top:20.75px;font-size:14px;line-height:14px;color:#434b5c;font-weight:400;letter-spacing:-0.175px;">aqa_uuid</div><div class="t" style="left:16.6px;top:52.75px;font-size:14px;line-height:14px;color:#434b5c;font-weight:400;letter-spacing:-0.069px;">aws:createdBy</div><div class="t" style="left:16.6px;top:84.75px;font-size:14px;line-height:14px;color:#434b5c;font-weight:400;letter-spacing:0.144px;">chart</div><div class="t" style="left:16.6px;top:116.75px;font-size:14px;line-height:14px;color:#434b5c;font-weight:400;letter-spacing:0.315px;">component</div><div class="t" style="left:16.6px;top:148.75px;font-size:14px;line-height:14px;color:#434b5c;font-weight:400;letter-spacing:0.123px;">controller_revision_hash</div><div class="t" style="left:16.6px;top:180.75px;font-size:14px;line-height:14px;color:#434b5c;font-weight:400;letter-spacing:0.287px;">controller_uid</div><div class="t" style="left:16.6px;top:212.75px;font-size:14px;line-height:14px;color:#434b5c;font-weight:400;letter-spacing:0.113px;">created_by</div><div class="t" style="left:16.6px;top:244.75px;font-size:14px;line-height:14px;color:#434b5c;font-weight:400;letter-spacing:0.014px;">helm_sh_chart</div><div class="t" style="left:16.6px;top:276.75px;font-size:14px;line-height:14px;color:#434b5c;font-weight:400;letter-spacing:0.301px;">heritage</div><div class="t" style="left:16.6px;top:308.75px;font-size:14px;line-height:14px;color:#434b5c;font-weight:400;letter-spacing:0.156px;">job</div><div class="t" style="left:16.6px;top:340.75px;font-size:14px;line-height:14px;color:#434b5c;font-weight:400;letter-spacing:-0.071px;">job_name</div></div><div style="position:absolute;left:1720px;top:0px;width:1px;height:879px;background:#000"></div><div style="position:absolute;left:1698px;top:857px;width:23px;height:22px;background:#2a2a2a"></div><div style="position:absolute;left:1698px;top:857px;width:22px;height:22px;background:#fff;border-bottom-right-radius:11px"></div>
</body></html>
